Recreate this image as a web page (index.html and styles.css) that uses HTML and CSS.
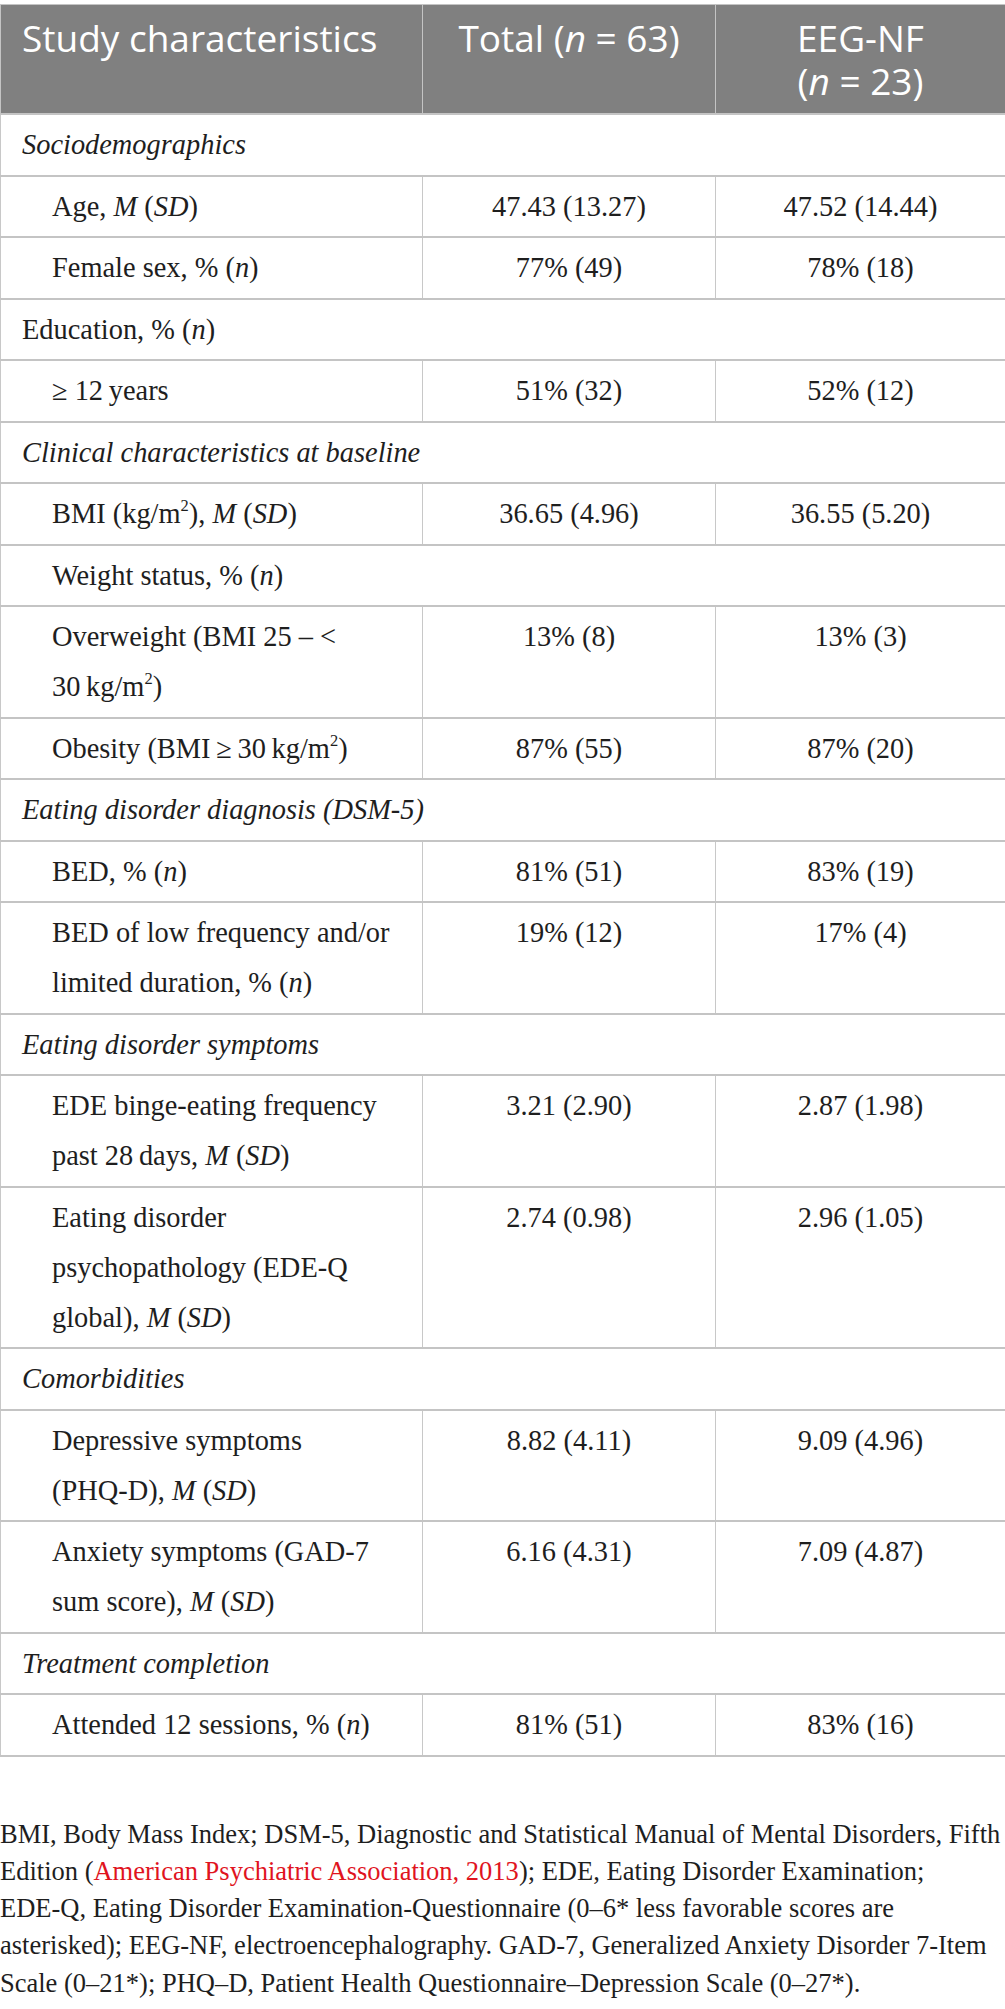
FILE: index.html
```html
<!DOCTYPE html>
<html lang="en">
<head>
<meta charset="utf-8">
<title>Study characteristics</title>
<link rel="stylesheet" href="styles.css">
</head>
<body>
<div class="page">
  <table class="stats">
    <colgroup>
      <col class="c1">
      <col class="c2">
      <col class="c3">
    </colgroup>
    <thead>
      <tr>
        <th class="h-label">Study characteristics</th>
        <th class="h-num">Total <span class="nowrap">(<i>n</i> = 63)</span></th>
        <th class="h-num">EEG-NF <span class="nowrap">(<i>n</i> = 23)</span></th>
      </tr>
    </thead>
    <tbody>
      <tr class="section"><td colspan="3"><i>Sociodemographics</i></td></tr>
      <tr><td class="lbl">Age, <i>M</i> (<i>SD</i>)</td><td class="num">47.43 (13.27)</td><td class="num">47.52 (14.44)</td></tr>
      <tr><td class="lbl">Female sex, % (<i>n</i>)</td><td class="num">77% (49)</td><td class="num">78% (18)</td></tr>
      <tr class="section"><td colspan="3">Education, % (<i>n</i>)</td></tr>
      <tr><td class="lbl">≥ 12&#8239;years</td><td class="num">51% (32)</td><td class="num">52% (12)</td></tr>
      <tr class="section"><td colspan="3"><i>Clinical characteristics at baseline</i></td></tr>
      <tr><td class="lbl">BMI (kg/m<sup>2</sup>), <i>M</i> (<i>SD</i>)</td><td class="num">36.65 (4.96)</td><td class="num">36.55 (5.20)</td></tr>
      <tr class="section sub"><td colspan="3">Weight status, % (<i>n</i>)</td></tr>
      <tr><td class="lbl">Overweight (BMI 25 – &lt; <span class="nowrap">30&#8239;kg/m<sup>2</sup>)</span></td><td class="num">13% (8)</td><td class="num">13% (3)</td></tr>
      <tr><td class="lbl">Obesity (BMI&#8239;≥&#8239;30&#8239;kg/m<sup>2</sup>)</td><td class="num">87% (55)</td><td class="num">87% (20)</td></tr>
      <tr class="section"><td colspan="3"><i>Eating disorder diagnosis (DSM-5)</i></td></tr>
      <tr><td class="lbl">BED, % (<i>n</i>)</td><td class="num">81% (51)</td><td class="num">83% (19)</td></tr>
      <tr><td class="lbl">BED of low frequency and/or limited duration, % (<i>n</i>)</td><td class="num">19% (12)</td><td class="num">17% (4)</td></tr>
      <tr class="section"><td colspan="3"><i>Eating disorder symptoms</i></td></tr>
      <tr><td class="lbl">EDE binge-eating frequency past 28&#8239;days, <i>M</i> (<i>SD</i>)</td><td class="num">3.21 (2.90)</td><td class="num">2.87 (1.98)</td></tr>
      <tr><td class="lbl">Eating disorder psychopathology <span class="nowrap">(EDE-Q</span> global), <i>M</i> (<i>SD</i>)</td><td class="num">2.74 (0.98)</td><td class="num">2.96 (1.05)</td></tr>
      <tr class="section"><td colspan="3"><i>Comorbidities</i></td></tr>
      <tr><td class="lbl">Depressive symptoms <span class="nowrap">(PHQ-D),</span> <i>M</i> (<i>SD</i>)</td><td class="num">8.82 (4.11)</td><td class="num">9.09 (4.96)</td></tr>
      <tr><td class="lbl">Anxiety symptoms <span class="nowrap">(GAD-7</span> sum score), <i>M</i> (<i>SD</i>)</td><td class="num">6.16 (4.31)</td><td class="num">7.09 (4.87)</td></tr>
      <tr class="section"><td colspan="3"><i>Treatment completion</i></td></tr>
      <tr><td class="lbl">Attended 12 sessions, % (<i>n</i>)</td><td class="num">81% (51)</td><td class="num">83% (16)</td></tr>
    </tbody>
  </table>
  <p class="note">BMI, Body Mass Index; DSM-5, Diagnostic and Statistical Manual of Mental Disorders, Fifth<br>Edition (<a class="ref" href="#">American Psychiatric Association, 2013</a>); EDE, Eating Disorder Examination;<br>EDE-Q, Eating Disorder Examination-Questionnaire (0–6* less favorable scores are<br>asterisked); EEG-NF, electroencephalography. GAD-7, Generalized Anxiety Disorder 7-Item<br>Scale (0–21*); PHQ–D, Patient Health Questionnaire–Depression Scale (0–27*).</p>
</div>
</body>
</html>
```

FILE: styles.css
```css
html, body {
  margin: 0;
  padding: 0;
  background: #ffffff;
}

.page {
  width: 1005px;
  padding-top: 4px;
  color: #1e1e1e;
  font-family: "Liberation Serif", "Times New Roman", serif;
}

.nowrap {
  white-space: nowrap;
}

.stats {
  width: 1005px;
  border-collapse: collapse;
  table-layout: fixed;
}

.c1 { width: 422px; }
.c2 { width: 293px; }
.c3 { width: 290px; }

.stats th {
  background: #808080;
  color: #ffffff;
  font-family: "Open Sans", "DejaVu Sans", sans-serif;
  font-weight: 400;
  font-size: 37px;
  line-height: 43px;
  vertical-align: top;
  padding: 11px 21px 11px;
  border: 1px solid #c4c4c4;
  border-bottom-width: 2px;
}

.stats th i {
  font-style: italic;
}

.h-label { text-align: left; }
.h-num { text-align: center; }

.stats td {
  font-size: 28.4px;
  line-height: 50px;
  vertical-align: top;
  padding: 5px 10px 4.5px;
  border-left: 1px solid #c8c8c8;
  border-right: 1px solid #c8c8c8;
  border-top: 2px solid #c4c4c4;
  border-bottom: 2px solid #c4c4c4;
}

.stats td.lbl {
  padding-left: 51px;
  text-align: left;
}

.stats td.num {
  text-align: center;
}

.section td {
  padding-left: 21px;
  text-align: left;
}

.section.sub td {
  padding-left: 51px;
}

.stats sup {
  font-size: 0.58em;
  line-height: 1;
  vertical-align: 0.72em;
}

.note {
  margin: 59px 0 0;
  font-size: 26.5px;
  line-height: 37.3px;
  white-space: nowrap;
  color: #1e1e1e;
}

.ref {
  color: #e0141e;
  text-decoration: none;
}
```
